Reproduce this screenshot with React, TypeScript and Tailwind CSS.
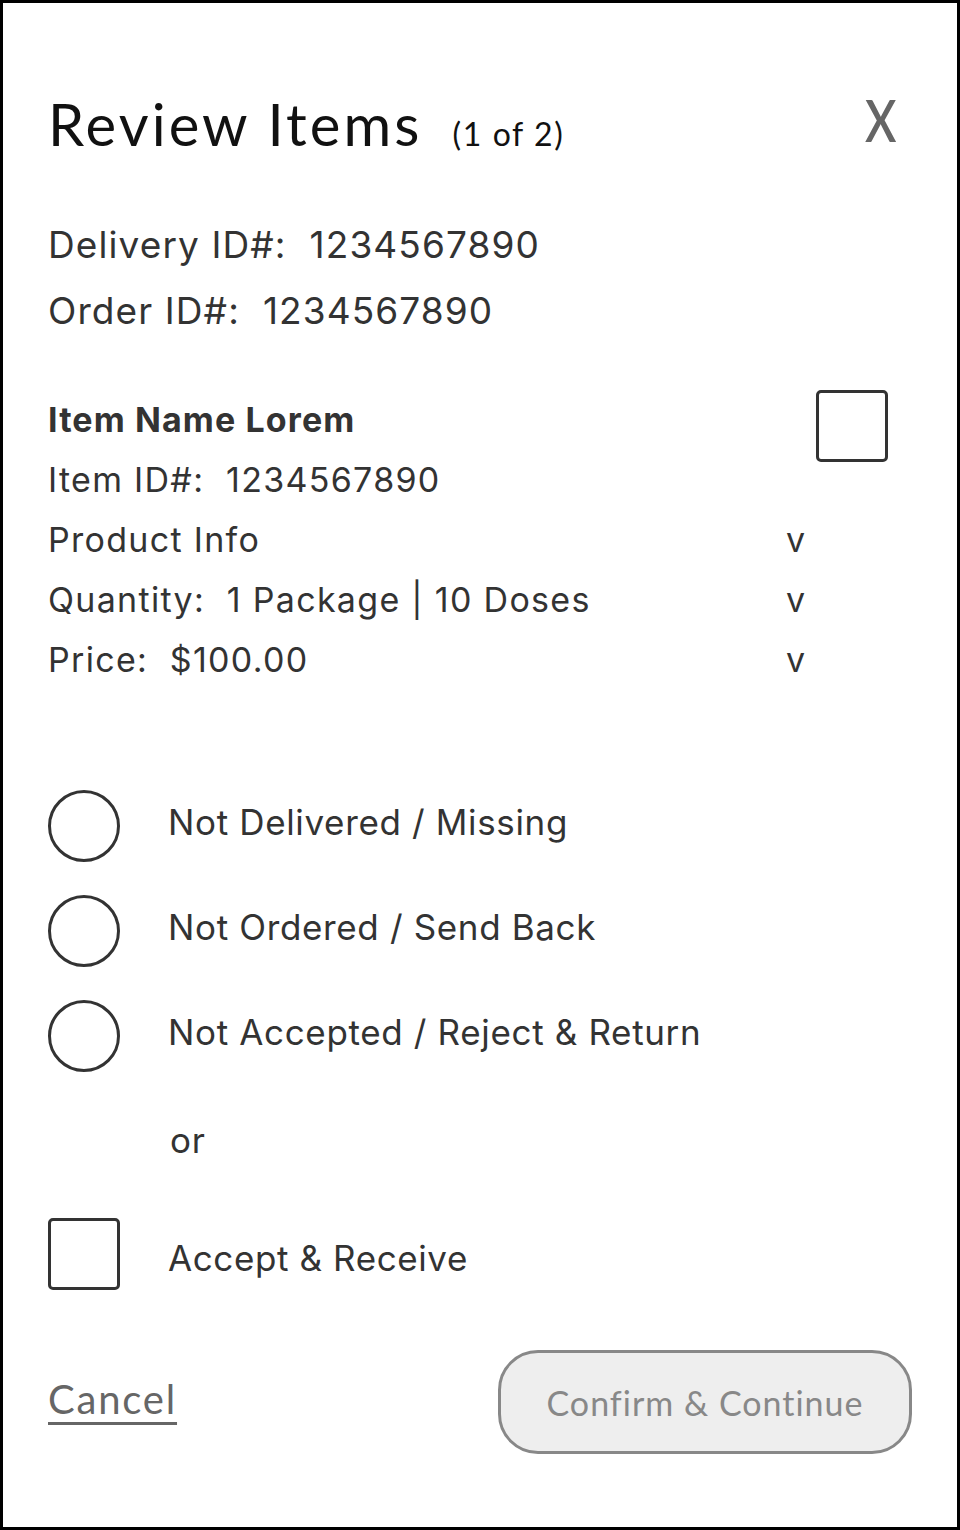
import React from "react";

const inter = { fontFamily: "Inter, 'Noto Sans', sans-serif" };
const lato = { fontFamily: "Lato, 'Open Sans', sans-serif" };

function Radio({ label }: { label: string }) {
  return (
    <div className="flex items-center">
      <div className="w-[72px] h-[72px] rounded-full border-[3px] border-[#333] box-border shrink-0" />
      <span
        className="ml-[48px] text-[35px] leading-[40px] tracking-[0.65px] text-[#333] mb-[8px]"
        style={inter}
      >
        {label}
      </span>
    </div>
  );
}

function ItemRow({ children, chevron }: { children: React.ReactNode; chevron?: boolean }) {
  return (
    <div
      className="flex items-start justify-between h-[60px] text-[34px] leading-[60px] tracking-[1.3px] text-[#333]"
      style={inter}
    >
      <span>{children}</span>
      {chevron && <span className="tracking-normal">v</span>}
    </div>
  );
}

export default function App() {
  return (
    <div className="w-[960px] h-[1530px] box-border border-[3px] border-black bg-white overflow-hidden">
      <div className="pl-[45px] pr-[45px] pt-[89px]">
        {/* Title row */}
        <div className="flex items-start justify-between">
          <div className="flex items-baseline">
            <span className="text-[58px] leading-[64px] tracking-[3.1px] text-[#111]" style={lato}>
              Review Items
            </span>
            <span className="ml-[30px] text-[32px] leading-[64px] tracking-[1.6px] text-[#111]" style={lato}>
              (1 of 2)
            </span>
          </div>
          <span
            className="text-[58px] leading-[64px] text-[#666] mr-[16px] -mt-[4px] inline-block scale-x-[0.82] origin-right font-semibold"
            style={lato}
          >
            X
          </span>
        </div>

        {/* IDs */}
        <div className="mt-[46px] text-[37px] leading-[66px] tracking-[1.1px] text-[#333]" style={inter}>
          <div className="whitespace-pre">Delivery ID#:  1234567890</div>
          <div className="whitespace-pre">Order ID#:  1234567890</div>
        </div>

        {/* Item */}
        <div className="mt-[46px] flex items-start">
          <div className="w-[757px]">
            <ItemRow>
              <span className="font-bold tracking-[1.1px]">Item Name Lorem</span>
            </ItemRow>
            <ItemRow>
              <span className="whitespace-pre">Item ID#:  1234567890</span>
            </ItemRow>
            <ItemRow chevron>Product Info</ItemRow>
            <ItemRow chevron>
              <span className="whitespace-pre">Quantity:  1 Package | 10 Doses</span>
            </ItemRow>
            <ItemRow chevron>
              <span className="whitespace-pre">Price:  $100.00</span>
            </ItemRow>
          </div>
          <div className="ml-[11px] w-[72px] h-[72px] rounded-[5px] border-[3px] border-[#333] box-border shrink-0" />
        </div>

        {/* Options */}
        <div className="mt-[100px] flex flex-col gap-[33px]">
          <Radio label="Not Delivered / Missing" />
          <Radio label="Not Ordered / Send Back" />
          <Radio label="Not Accepted / Reject & Return" />
        </div>

        <div className="mt-[48px] ml-[122px] text-[35px] leading-[40px] tracking-[0.65px] text-[#333]" style={inter}>
          or
        </div>

        <div className="mt-[58px] flex items-center">
          <div className="w-[72px] h-[72px] rounded-[5px] border-[3px] border-[#333] box-border shrink-0" />
          <span
            className="ml-[48px] mt-[8px] text-[35px] leading-[40px] tracking-[0.6px] text-[#333]"
            style={inter}
          >
            Accept &amp; Receive
          </span>
        </div>

        {/* Footer */}
        <div className="mt-[60px] flex items-center justify-between">
          <span
            className="text-[40px] leading-[48px] tracking-[1.8px] text-[#666] underline decoration-[3px] underline-offset-[8px] mb-[6px]"
            style={lato}
          >
            Cancel
          </span>
          <button
            className="w-[414px] h-[104px] box-border rounded-[40px] border-[3px] border-[#888] bg-[#eeeeee] text-[34px] tracking-[1px] text-[#888] flex items-center justify-center"
            style={lato}
          >
            Confirm &amp; Continue
          </button>
        </div>
      </div>
    </div>
  );
}
